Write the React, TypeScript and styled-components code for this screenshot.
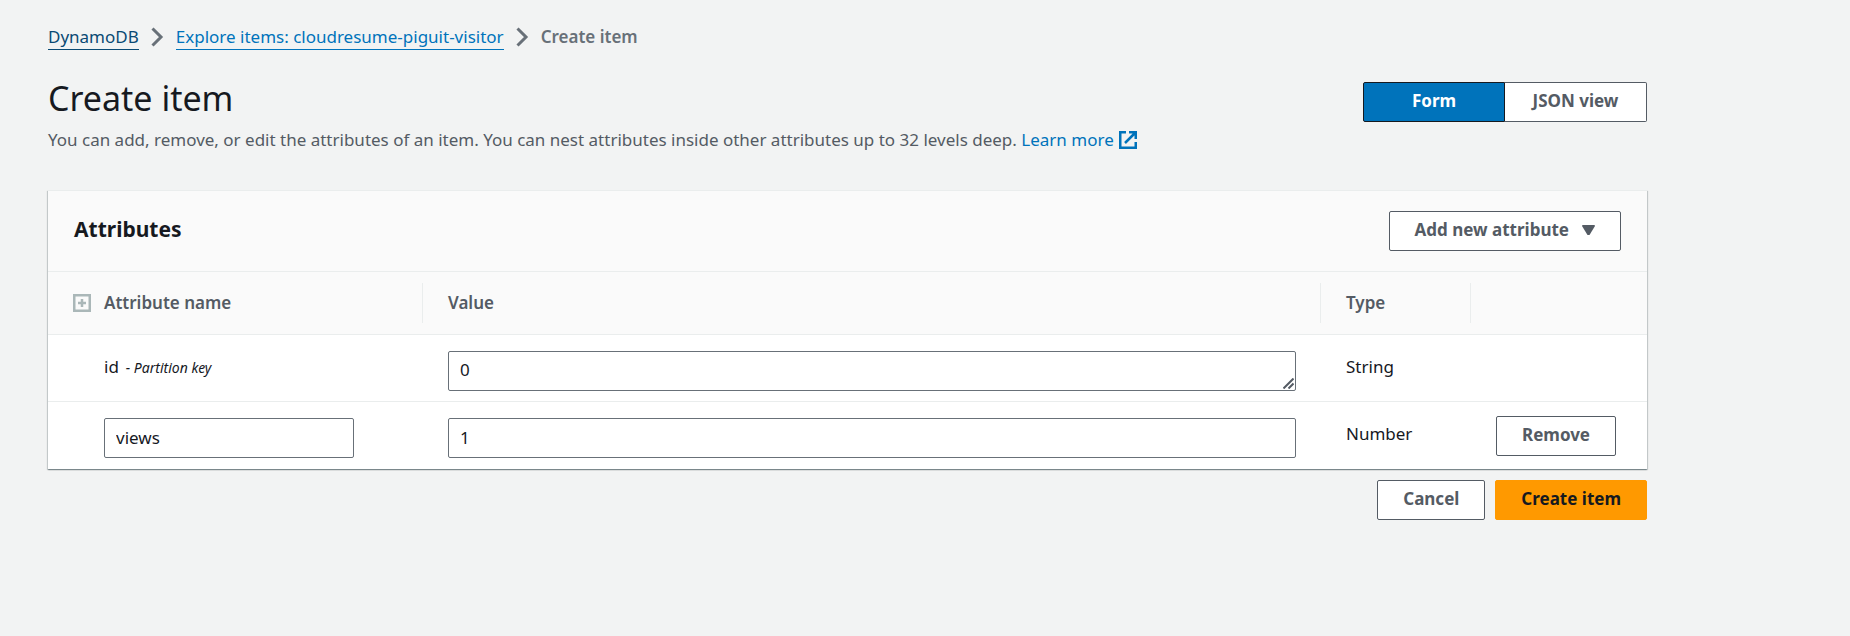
import React, { useState } from "react";
import styled, { createGlobalStyle, css } from "styled-components";

const color = {
  page: "#f2f3f3",
  text: "#16191f",
  secondary: "#545b64",
  muted: "#687078",
  link: "#0073bb",
  linkHover: "#0a4a74",
  line: "#eaeded",
  header: "#fafafa",
  disabled: "#aab7b8",
  orange: "#ff9900",
};

const GlobalStyle = createGlobalStyle`
  *, *::before, *::after { box-sizing: border-box; }
  body {
    margin: 0;
    background: ${color.page};
    color: ${color.text};
    font-family: "Noto Sans", "Open Sans", sans-serif;
    font-size: 17px;
    line-height: 28px;
  }
  button, input, textarea { font: inherit; color: inherit; }
`;

const Page = styled.main`
  max-width: 1850px;
  padding: 23px 203px 40px 48px;
`;

const Breadcrumbs = styled.ol`
  display: flex;
  align-items: center;
  gap: 12px;
  margin: 0 0 25px;
  padding: 0;
  list-style: none;
`;

const Crumb = styled.li`
  display: flex;
  align-items: center;
  gap: 12px;
`;

const CrumbLink = styled.a<{ $dark?: boolean }>`
  color: ${(p) => (p.$dark ? color.linkHover : color.link)};
  text-decoration: none;
  line-height: 24px;
  border-bottom: 1px solid currentColor;
`;

const CurrentCrumb = styled.span`
  color: ${color.muted};
  font-weight: 600;
`;

const PageHeader = styled.header`
  display: flex;
  justify-content: space-between;
  align-items: flex-start;
  margin-bottom: 36px;
`;

const Title = styled.h1`
  margin: 0 0 6px;
  font-size: 34px;
  line-height: 44px;
  font-weight: 400;
`;

const Description = styled.p`
  margin: 0;
  color: ${color.secondary};
`;

const ExternalLink = styled.a`
  display: inline-flex;
  align-items: center;
  gap: 5px;
  color: ${color.link};
  text-decoration: none;
`;

const Segments = styled.div`
  display: flex;
  margin-top: 6px;
`;

const buttonBase = css`
  height: 40px;
  padding: 0 25px 2px;
  border: 1px solid ${color.secondary};
  border-radius: 2px;
  background: #fff;
  color: ${color.secondary};
  font-weight: 700;
  white-space: nowrap;
  cursor: pointer;
`;

const Segment = styled.button<{ $selected: boolean }>`
  ${buttonBase}
  width: 142px;
  border-radius: 0 2px 2px 0;
  border-left: 0;
  ${(p) =>
    p.$selected &&
    css`
      border: 1px solid ${color.text};
      background: ${color.link};
      color: #fff;
      border-radius: 2px 0 0 2px;
    `}
`;

const Button = styled.button<{ $primary?: boolean }>`
  ${buttonBase}
  display: inline-flex;
  align-items: center;
  gap: 13px;
  ${(p) =>
    p.$primary &&
    css`
      border-color: ${color.orange};
      background: ${color.orange};
      color: ${color.text};
    `}
`;

const Panel = styled.section`
  background: #fff;
  border-top: 1px solid ${color.line};
  box-shadow: 0 1px 1px 0 rgba(0, 28, 36, 0.3), 1px 1px 1px 0 rgba(0, 28, 36, 0.15),
    -1px 1px 1px 0 rgba(0, 28, 36, 0.15);
`;

const PanelHeader = styled.div`
  display: flex;
  justify-content: space-between;
  align-items: flex-start;
  padding: 20px 26px;
  background: ${color.header};
  border-bottom: 1px solid ${color.line};
`;

const PanelTitle = styled.h2`
  margin: 0;
  font-size: 21px;
  line-height: 36px;
  font-weight: 700;
`;

const Table = styled.table`
  width: 100%;
  table-layout: fixed;
  border-collapse: separate;
  border-spacing: 0;
`;

const Column = styled.col<{ $width?: number }>`
  width: ${(p) => (p.$width ? `${p.$width}px` : "auto")};
`;

const HeadCell = styled.th`
  padding: 11px 0;
  background: ${color.header};
  border-bottom: 1px solid ${color.line};
  text-align: left;
  font-weight: 600;
  color: ${color.secondary};
`;

const HeadLabel = styled.div<{ $divided?: boolean }>`
  display: flex;
  align-items: center;
  gap: 13px;
  height: 40px;
  padding: 0 25px;
  border-right: 1px solid ${(p) => (p.$divided ? color.line : "transparent")};
`;

const cellPadding = {
  text: "18px 25px 10px",
  field: "16px 25px 10px",
  action: "14px 25px 10px",
};

const Cell = styled.td<{ $kind?: keyof typeof cellPadding }>`
  vertical-align: top;
  padding: ${(p) => cellPadding[p.$kind ?? "text"]};
  border-bottom: 1px solid ${color.line};

  tr:last-child > & {
    border-bottom-color: transparent;
  }
`;

const Indent = styled.div`
  padding-left: 31px;
`;

const KeyNote = styled.em`
  margin-left: 7px;
  font-size: 14px;
`;

const fieldBase = css`
  display: block;
  width: 100%;
  height: 40px;
  border: 1px solid ${color.muted};
  border-radius: 2px;
  background: #fff;
  outline: none;
`;

const TextField = styled.input`
  ${fieldBase}
  padding: 0 11px 2px;
`;

const NameField = styled(TextField)`
  max-width: 250px;
`;

const TextAreaFrame = styled.div`
  position: relative;
`;

const TextArea = styled.textarea`
  ${fieldBase}
  padding: 4px 11px;
  overflow: hidden;
  resize: vertical;

  &::-webkit-resizer {
    background: transparent;
  }
`;

const Actions = styled.div`
  display: flex;
  justify-content: flex-end;
  gap: 10px;
  margin-top: 11px;
`;

const Icon = styled.svg`
  display: block;
  flex: none;
  fill: none;
`;

const Grip = styled(Icon)`
  position: absolute;
  right: 2px;
  bottom: 2px;
  pointer-events: none;
`;

const Chevron = () => (
  <Icon width="13" height="20" viewBox="0 0 13 20" aria-hidden="true">
    <path d="M1.5 1.5l8.5 8.5-8.5 8.5" stroke={color.muted} strokeWidth="3" />
  </Icon>
);

export default function App() {
  const [view, setView] = useState("form");
  const [name, setName] = useState("views");
  const [id, setId] = useState("0");
  const [value, setValue] = useState("1");

  return (
    <>
      <GlobalStyle />
      <Page>
        <nav aria-label="Breadcrumbs">
          <Breadcrumbs>
            <Crumb>
              <CrumbLink href="#dynamodb" $dark>
                DynamoDB
              </CrumbLink>
              <Chevron />
            </Crumb>
            <Crumb>
              <CrumbLink href="#explore">Explore items: cloudresume-piguit-visitor</CrumbLink>
              <Chevron />
            </Crumb>
            <Crumb>
              <CurrentCrumb aria-current="page">Create item</CurrentCrumb>
            </Crumb>
          </Breadcrumbs>
        </nav>

        <PageHeader>
          <div>
            <Title>Create item</Title>
            <Description>
              You can add, remove, or edit the attributes of an item. You can nest attributes inside other
              attributes up to 32 levels deep.{" "}
              <ExternalLink href="#learn">
                Learn more
                <Icon width="18" height="18" viewBox="0 0 18 18" aria-hidden="true">
                  <path d="M7 1.25H1.25v15.5h15.5V11" stroke="currentColor" strokeWidth="2.5" />
                  <path d="M10 1.25h6.75V8M16.5 1.5L6 12" stroke="currentColor" strokeWidth="2.5" />
                </Icon>
              </ExternalLink>
            </Description>
          </div>
          <Segments role="group" aria-label="Editor view">
            <Segment type="button" $selected={view === "form"} onClick={() => setView("form")}>
              Form
            </Segment>
            <Segment type="button" $selected={view === "json"} onClick={() => setView("json")}>
              JSON view
            </Segment>
          </Segments>
        </PageHeader>

        <Panel>
          <PanelHeader>
            <PanelTitle>Attributes</PanelTitle>
            <Button type="button">
              Add new attribute
              <Icon width="13" height="10" viewBox="0 0 13 10" aria-hidden="true">
                <path d="M.5 0h12l.5 1-5.5 9h-2L0 1z" fill={color.secondary} />
              </Icon>
            </Button>
          </PanelHeader>
          <Table>
            <colgroup>
              <Column $width={375} />
              <Column />
              <Column $width={150} />
              <Column $width={176} />
            </colgroup>
            <thead>
              <tr>
                <HeadCell scope="col">
                  <HeadLabel $divided>
                    <Icon width="18" height="18" viewBox="0 0 18 18" aria-hidden="true">
                      <path d="M1.25 1.25h15.5v15.5H1.25zM9 5v8M5 9h8" stroke={color.disabled} strokeWidth="2.5" />
                    </Icon>
                    Attribute name
                  </HeadLabel>
                </HeadCell>
                <HeadCell scope="col">
                  <HeadLabel $divided>Value</HeadLabel>
                </HeadCell>
                <HeadCell scope="col">
                  <HeadLabel $divided>Type</HeadLabel>
                </HeadCell>
                <HeadCell scope="col" aria-label="Actions">
                  <HeadLabel />
                </HeadCell>
              </tr>
            </thead>
            <tbody>
              <tr>
                <Cell>
                  <Indent>
                    id<KeyNote>- Partition key</KeyNote>
                  </Indent>
                </Cell>
                <Cell $kind="field">
                  <TextAreaFrame>
                    <TextArea aria-label="Value of id" rows={1} value={id} onChange={(e) => setId(e.target.value)} />
                    <Grip width="11" height="11" viewBox="0 0 11 11" aria-hidden="true">
                      <path d="M.5 10.5l10-10M5.5 10.5l5-5" stroke={color.secondary} strokeWidth="2" />
                    </Grip>
                  </TextAreaFrame>
                </Cell>
                <Cell>String</Cell>
                <Cell />
              </tr>
              <tr>
                <Cell $kind="field">
                  <Indent>
                    <NameField
                      aria-label="Attribute name"
                      value={name}
                      onChange={(e) => setName(e.target.value)}
                    />
                  </Indent>
                </Cell>
                <Cell $kind="field">
                  <TextField aria-label="Value of views" value={value} onChange={(e) => setValue(e.target.value)} />
                </Cell>
                <Cell>Number</Cell>
                <Cell $kind="action">
                  <Button type="button">Remove</Button>
                </Cell>
              </tr>
            </tbody>
          </Table>
        </Panel>

        <Actions>
          <Button type="button">Cancel</Button>
          <Button type="submit" $primary>
            Create item
          </Button>
        </Actions>
      </Page>
    </>
  );
}
